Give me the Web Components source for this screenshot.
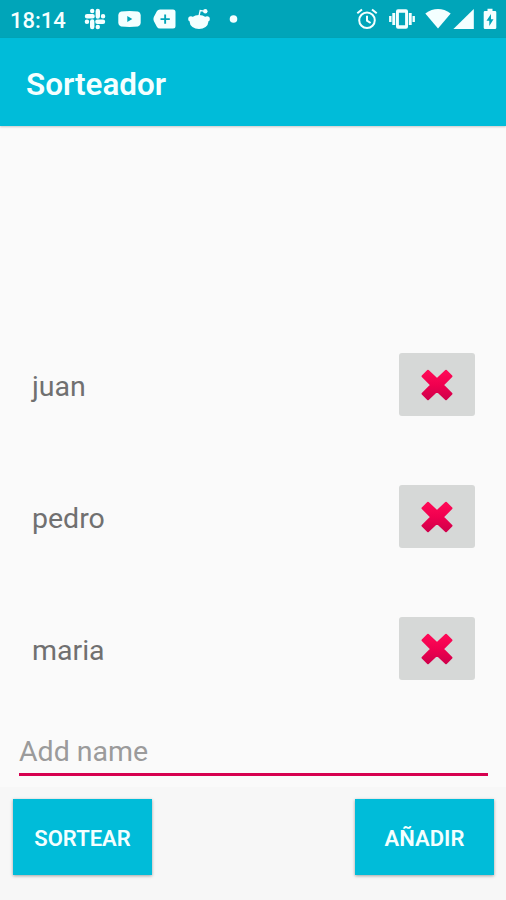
<!DOCTYPE html>
<html lang="es">
<head>
<meta charset="UTF-8">
<meta name="viewport" content="width=device-width, initial-scale=1">
<title>Sorteador</title>
<style>
  :root {
    --primary: #00bcd9;
    --primary-dark: #00a5b9;
    --accent: #d6004f;
    --page: #fafafa;
  }
  body {
    margin: 0;
    font-family: Roboto, "Noto Sans", sans-serif;
    background: var(--page);
  }
</style>
</head>
<body>
<sorteo-app></sorteo-app>

<script>
class StatusBar extends HTMLElement {
  constructor() {
    super();
    this.attachShadow({ mode: "open" });
  }

  connectedCallback() {
    this.shadowRoot.innerHTML = `
    <style>
    :host {
      display: flex;
      justify-content: space-between;
      align-items: center;
      height: 38px;
      padding: 0 9px 0 10px;
      box-sizing: border-box;
      background: var(--primary-dark);
      color: #f4ffff;
    }
    div {
      display: flex;
      align-items: center;
    }
    .time {
      width: 74px;
      font-size: 22px;
      font-weight: 500;
      line-height: 38px;
      padding-top: 3px;
    }
    svg {
      display: block;
      fill: currentColor;
    }
    .left { gap: 12px; }
    .left .time { margin-right: -12px; }
    </style>
    <div class="left">
      <span class="time">18:14</span>
      <svg width="22" height="22" viewBox="0 0 22 22">
        <g fill="none" stroke="currentColor" stroke-width="4.400" stroke-linecap="round">
          <path d="M3 8.200H8.600M13.800 3V8.600M19 13.800H13.400M8.200 19V13.400"/>
          <path d="M8.200 2.900V3M19 8.200H19.100M13.800 19V19.100M3 13.800H2.900"/>
        </g>
      </svg>
      <svg width="23" height="22" viewBox="0 0 23 22">
        <path fill-rule="evenodd" d="M3 3.500Q11.500 2.500 20 3.500Q22.500 4 22.700 7V15Q22.500 18 20 18.500Q11.500 19.300 3 18.500Q.5 18 .3 15V7Q.5 4 3 3.500ZM9.300 8V14L14.300 11Z"/>
      </svg>
      <svg width="23" height="22" viewBox="0 0 23 22">
        <path fill-rule="evenodd" d="M7 1.500H20Q22.500 1.500 22.500 4V18Q22.500 20.500 20 20.500H7Q5 20.500 4 19L.8 13Q0 11 .8 9L4 3Q5 1.500 7 1.500ZM11.200 6.500V10.200H7.500V12.100H11.200V15.800H13.100V12.100H16.800V10.200H13.100V6.500Z"/>
      </svg>
      <svg width="22" height="22" viewBox="0 0 22 22">
        <ellipse cx="11" cy="14" rx="9.300" ry="6.900"/>
        <circle cx="2.900" cy="11" r="2.700"/>
        <circle cx="19.100" cy="11" r="2.700"/>
        <circle cx="17.300" cy="3.300" r="2.200"/>
        <path d="M11 8L12.200 2.500L16 3.200" fill="none" stroke="currentColor" stroke-width="1.300"/>
      </svg>
      <svg width="23" height="22" viewBox="0 0 23 22"><circle cx="11.500" cy="11" r="3.800"/></svg>
    </div>
    <div class="right">
      <svg width="22" height="22" viewBox="0 0 22 22" style="margin-right:11px">
        <g fill="none" stroke="currentColor" stroke-width="2">
          <circle cx="11" cy="12.300" r="7.800"/>
          <path d="M1.300 5.300L6 1.500M20.700 5.300L16 1.500M11 7.800V12.700L14.600 15" />
        </g>
      </svg>
      <svg width="26" height="22" viewBox="0 0 26 22" style="margin-right:10px">
        <path fill-rule="evenodd" d="M9 1.200H17Q19 1.200 19 3.200V18.800Q19 20.800 17 20.800H9Q7 20.800 7 18.800V3.200Q7 1.200 9 1.200ZM9.900 4.800V17.200H16.100V4.800Z"/>
        <path d="M3.300 5H6.200V17H3.300ZM.1 8H2.500V14H.1ZM19.800 5H22.700V17H19.800ZM23.500 8H25.900V14H23.500Z"/>
      </svg>
      <svg width="26" height="22" viewBox="0 0 26 22" style="margin-right:2px">
        <path d="M.3 5.500Q13-3.300 25.700 5.500L13 20.500Z"/>
      </svg>
      <svg width="21" height="22" viewBox="0 0 21 22" style="margin-right:9px">
        <path d="M20.800 1V21H.4Z"/>
      </svg>
      <svg width="14" height="22" viewBox="0 0 14 22">
        <path fill-rule="evenodd" d="M4.500 .8H9.500V3H12Q13.300 3 13.300 4.300V19.700Q13.300 21 12 21H2Q.7 21 .7 19.700V4.300Q.7 3 2 3H4.500ZM8 6L3.500 12.800H6.300V18L10.500 11.200H8Z"/>
      </svg>
    </div>`;
  }
}

class AppToolbar extends HTMLElement {
  constructor() {
    super();
    this.attachShadow({ mode: "open" });
  }

  connectedCallback() {
    this.shadowRoot.innerHTML = `
    <style>
    :host {
      display: flex;
      align-items: center;
      height: 88px;
      padding: 4px 26px 0;
      box-sizing: border-box;
      background: var(--primary);
      box-shadow: 0 1px 2px rgba(0, 0, 0, 0.2);
      color: #f4ffff;
    }
    h1 {
      margin: 0;
      font-size: 31.4px;
      font-weight: 600;
    }
    </style>
    <h1><slot></slot></h1>`;
  }
}

class NameRow extends HTMLElement {
  constructor() {
    super();
    this.attachShadow({ mode: "open" });
  }

  connectedCallback() {
    this.shadowRoot.innerHTML = `
    <style>
    :host {
      display: flex;
      justify-content: space-between;
      align-items: center;
      height: 132px;
      padding: 0 31px 0 32px;
      box-sizing: border-box;
      font-size: 28.5px;
      color: #707070;
    }
    span { padding-top: 2px; }
    button {
      display: flex;
      align-items: center;
      justify-content: center;
      width: 76px;
      height: 63px;
      padding: 0;
      margin-bottom: 1px;
      border: 0;
      border-radius: 3px;
      background: #d6d8d7;
    }
    </style>
    <span><slot></slot></span>
    <button aria-label="Eliminar">
      <svg width="32" height="32" viewBox="0 0 32 32">
        <defs>
          <linearGradient id="red" x1="0" y1="0" x2="0" y2="1">
            <stop offset="0" stop-color="#ff0a57"/>
            <stop offset=".5" stop-color="#f0004f"/>
            <stop offset="1" stop-color="#d0004b"/>
          </linearGradient>
        </defs>
        <path fill="url(#red)" stroke="url(#red)" stroke-width="2" stroke-linejoin="round" d="M7 1.800L16 10.200L25 1.800L30.500 7.300L21.800 16L30.500 24.700L25 30.200L16 21.800L7 30.200L1.500 24.700L10.200 16L1.500 7.300Z"/>
      </svg>
    </button>`;
  }
}

class NameField extends HTMLElement {
  constructor() {
    super();
    this.attachShadow({ mode: "open" });
  }

  connectedCallback() {
    this.shadowRoot.innerHTML = `
    <style>
    :host {
      display: block;
      height: 72px;
      padding: 16px 18px 0 19px;
      box-sizing: border-box;
    }
    div {
      height: 45px;
      line-height: 42px;
      font-size: 28.5px;
      color: #9b9b9b;
      border-bottom: 3px solid var(--accent);
      box-sizing: border-box;
    }
    </style>
    <div><slot></slot></div>`;
  }
}

class RaisedButton extends HTMLElement {
  constructor() {
    super();
    this.attachShadow({ mode: "open" });
  }

  connectedCallback() {
    this.shadowRoot.innerHTML = `
    <style>
    :host { display: block; }
    button {
      width: 139px;
      height: 76px;
      padding: 3px 0 0;
      border: 0;
      background: var(--primary);
      box-shadow: 0 1px 3px rgba(0, 0, 0, 0.35);
      color: #f4ffff;
      font: 600 22px Roboto, "Noto Sans", sans-serif;
      text-transform: uppercase;
    }
    </style>
    <button><slot></slot></button>`;
  }
}

class SorteoApp extends HTMLElement {
  constructor() {
    super();
    this.attachShadow({ mode: "open" });
  }

  connectedCallback() {
    this.shadowRoot.innerHTML = `
    <style>
    :host {
      display: flex;
      flex-direction: column;
      height: 900px;
    }
    main {
      flex: 1;
      display: flex;
      flex-direction: column;
      justify-content: flex-end;
    }
    footer {
      display: flex;
      justify-content: space-between;
      height: 113px;
      padding: 12px 12px 0 13px;
      box-sizing: border-box;
      background: #f7f7f7;
    }
    </style>
    <status-bar></status-bar>
    <app-toolbar>Sorteador</app-toolbar>
    <main>
      <name-row>juan</name-row>
      <name-row>pedro</name-row>
      <name-row>maria</name-row>
      <name-field>Add name</name-field>
    </main>
    <footer>
      <raised-button>SORTEAR</raised-button>
      <raised-button>AÑADIR</raised-button>
    </footer>`;
  }
}

customElements.define("status-bar", StatusBar);
customElements.define("app-toolbar", AppToolbar);
customElements.define("name-row", NameRow);
customElements.define("name-field", NameField);
customElements.define("raised-button", RaisedButton);
customElements.define("sorteo-app", SorteoApp);
</script>
</body>
</html>
